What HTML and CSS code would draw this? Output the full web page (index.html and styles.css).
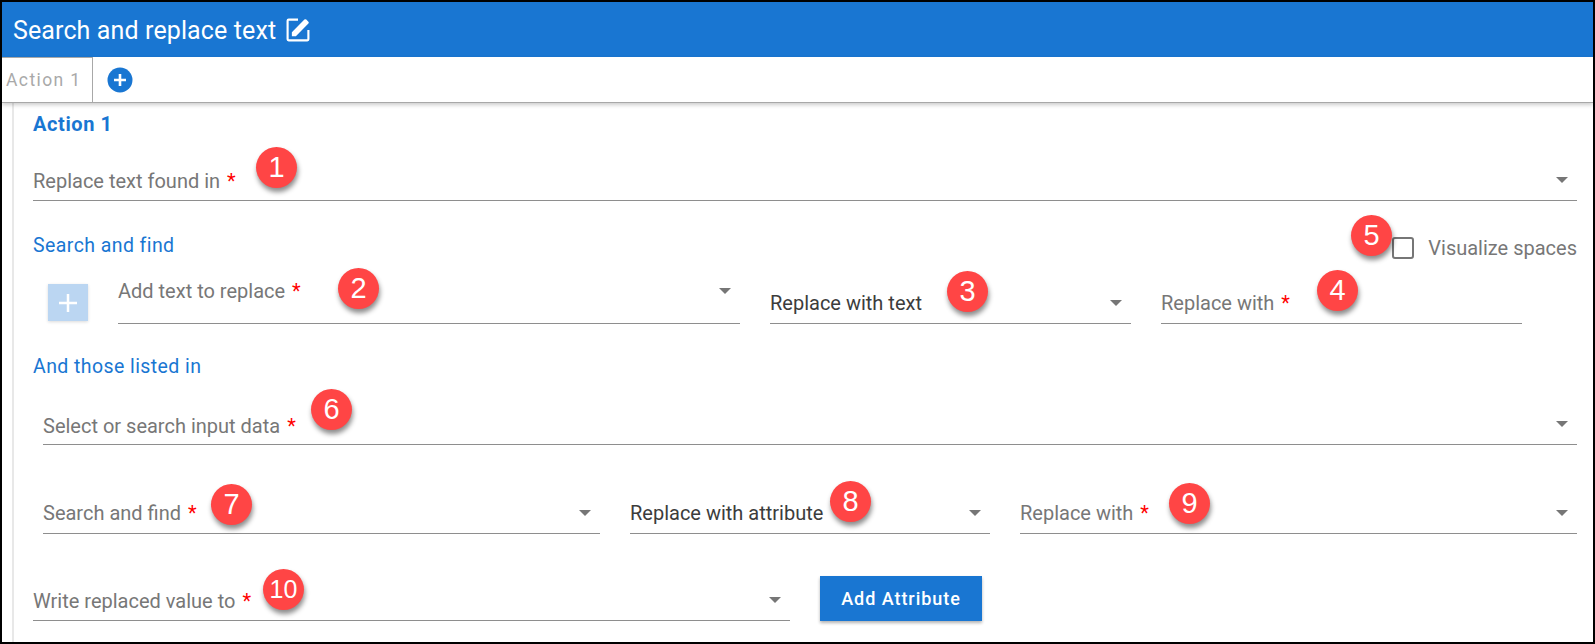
FILE: index.html
```html
<!DOCTYPE html>
<html lang="en">
<head>
<meta charset="utf-8">
<title>Search and replace text</title>
<link rel="stylesheet" href="styles.css">
</head>
<body>
<div class="frame">
  <header class="header">
    <span class="title">Search and replace text</span>
    <svg class="edit-icon" viewBox="0 0 24 24" width="32" height="32"><path d="M19 19H5V5h7V3.4H5A1.6 1.6 0 0 0 3.4 5v14A1.6 1.6 0 0 0 5 20.6h14a1.6 1.6 0 0 0 1.6-1.6v-7H19v7z" fill="#fff"/><path d="M7.4 16.6v-3L16.8 4.2a1 1 0 0 1 1.4 0l1.6 1.6a1 1 0 0 1 0 1.4l-9.4 9.4h-3z" fill="#fff"/></svg>
  </header>
  <nav class="tabs">
    <div class="tab">Action 1</div>
    <svg class="tab-add" viewBox="0 0 26 26" width="26" height="26"><circle cx="13" cy="13" r="12.5" fill="#1976d2"/><path d="M13 7v12M7 13h12" stroke="#fff" stroke-width="2.6"/></svg>
  </nav>
  <main class="panel">
    <h2 class="action-title">Action 1</h2>
    <div class="row row-first">
      <div class="field grow"><span class="label">Replace text found in <b>*</b></span><i class="caret"></i></div>
    </div>
    <div class="section-head">
      <span class="section">Search and find</span>
      <label class="check"><span class="box"></span>Visualize spaces</label>
    </div>
    <div class="row row-search">
      <button class="add-square" type="button"><svg viewBox="0 0 20 20" width="20" height="20"><path d="M10 1v18M1 10h18" stroke="#fff" stroke-width="2.5"/></svg></button>
      <div class="field f-text field-top"><span class="label">Add text to replace <b>*</b></span><i class="caret"></i></div>
      <div class="field f-mid"><span class="value">Replace with text</span><i class="caret"></i></div>
      <div class="field f-mid"><span class="label">Replace with <b>*</b></span></div>
    </div>
    <div class="section section-two">And those listed in</div>
    <div class="row row-data">
      <div class="field grow"><span class="label">Select or search input data <b>*</b></span><i class="caret"></i></div>
    </div>
    <div class="row row-attr">
      <div class="field f-find"><span class="label">Search and find <b>*</b></span><i class="caret"></i></div>
      <div class="field f-mid"><span class="value">Replace with attribute</span><i class="caret"></i></div>
      <div class="field f-find"><span class="label">Replace with <b>*</b></span><i class="caret"></i></div>
    </div>
    <div class="row row-write">
      <div class="field f-write"><span class="label">Write replaced value to <b>*</b></span><i class="caret"></i></div>
      <button class="primary" type="button">Add Attribute</button>
    </div>
  </main>
  <span class="badge b1">1</span>
  <span class="badge b2">2</span>
  <span class="badge b3">3</span>
  <span class="badge b4">4</span>
  <span class="badge b5">5</span>
  <span class="badge b6">6</span>
  <span class="badge b7">7</span>
  <span class="badge b8">8</span>
  <span class="badge b9">9</span>
  <span class="badge b10">10</span>
</div>
</body>
</html>
```
FILE: styles.css
```css
* { box-sizing: border-box; }
html, body { margin: 0; padding: 0; background: #fff; }
body { font-family: Roboto, "Liberation Sans", sans-serif; }
.frame { position: relative; width: 1595px; height: 644px; border: 2px solid #000; overflow: hidden; background: #fff; }
.header { height: 55px; background: #1976d2; display: flex; align-items: center; padding: 1px 0 0 11px; color: #fff; }
.title { font-size: 25px; letter-spacing: 0.12px; }
.edit-icon { margin: -1px 0 0 6px; }
.tabs { height: 46px; display: flex; align-items: center; border-bottom: 1px solid #a8a8a8; box-shadow: 0 2px 4px rgba(0,0,0,.2); position: relative; }
.tab { width: 91px; height: 46px; border: 1px solid #a8a8a8; border-left: 0; color: #a9a9a9; font-size: 17.5px; letter-spacing: 1.4px; display: flex; align-items: center; padding-left: 4px; }
.tab-add { margin-left: 14px; }
.panel { margin-left: 10px; height: 541px; border-left: 2px solid #e8e8e8; padding: 0 16px 0 19px; }
.action-title { margin: 0; padding-top: 11px; height: 36px; font-size: 20px; font-weight: 700; color: #1976d2; letter-spacing: .6px; line-height: 20px; }
.row { display: flex; }
.row-first { height: 62px; align-items: flex-end; }
.field { position: relative; height: 44px; border-bottom: 1px solid #8e8e8e; display: flex; align-items: flex-end; padding-bottom: 10px; font-size: 20px; line-height: 20px; }
.row-first .field { padding-bottom: 9px; }
.grow { flex: 1; }
.label { color: #777; }
.label b { color: #f00; font-weight: 400; margin-left: 2px; }
.value { color: #3c3c3c; }
.caret { position: absolute; right: 9px; bottom: 17px; width: 0; height: 0; border-left: 6px solid transparent; border-right: 6px solid transparent; border-top: 6px solid #767676; }
.section-head { display: flex; justify-content: space-between; align-items: flex-end; height: 58px; }
.section { font-size: 19.5px; color: #1976d2; letter-spacing: .42px; line-height: 20px; }
.section-head .section { margin-bottom: 3px; }
.check { display: flex; align-items: center; color: #777; font-size: 20px; line-height: 20px; }
.box { width: 22px; height: 22px; border: 2.5px solid #767676; border-radius: 3px; margin-right: 14px; }
.row-search { height: 65px; align-items: flex-end; }
.add-square { width: 40px; height: 37px; margin: 0 0 3px 15px; background: #bbd6f2; border: 0; padding: 0; display: flex; align-items: center; justify-content: center; box-shadow: 0 1px 3px rgba(0,0,0,.15); }
.f-text { width: 622px; margin-left: 30px; height: 53px; align-items: flex-start; padding-top: 10px; }
.f-text .caret { top: 17px; bottom: auto; }
.f-mid { width: 361px; margin-left: 30px; }
.section-two { margin-top: 33px; }
.row-data { height: 68px; padding-left: 10px; align-items: flex-end; }
.row-data .field { padding-bottom: 8px; }
.row-attr { height: 89px; padding-left: 10px; align-items: flex-end; }
.f-find { width: 557px; }
.row-attr .f-mid { margin-left: 30px; width: 360px; }
.row-attr .f-find + .f-mid + .f-find { margin-left: 30px; }
.row-write { height: 87px; align-items: flex-end; }
.f-write { width: 757px; padding-bottom: 9px; }
.primary { width: 162px; height: 45px; margin-left: 30px; background: #1976d2; color: #fff; border: 0; font: 500 18px Roboto, sans-serif; letter-spacing: .95px; box-shadow: 0 2px 3px rgba(0,0,0,.3); }
.badge { position: absolute; width: 41px; height: 41px; border-radius: 50%; background: #ff4545; color: #fff; font-family: "Liberation Sans", sans-serif; font-size: 29px; line-height: 40px; text-align: center; box-shadow: 1px 4px 5px rgba(0,0,0,.45); }
.b1 { left: 254px; top: 145px; }
.b2 { left: 336px; top: 266px; }
.b3 { left: 945px; top: 269px; }
.b4 { left: 1315px; top: 268px; }
.b5 { left: 1349px; top: 213px; }
.b6 { left: 309px; top: 387px; }
.b7 { left: 209px; top: 482px; }
.b8 { left: 828px; top: 479px; }
.b9 { left: 1167px; top: 481px; }
.b10 { left: 261px; top: 567px; font-size: 25px; }
```
